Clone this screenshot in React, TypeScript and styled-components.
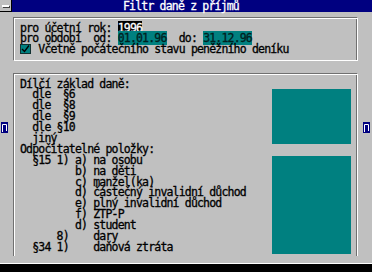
import React from "react";
import styled, { createGlobalStyle } from "styled-components";

const Global = createGlobalStyle`
  html, body { margin: 0; padding: 0; background: #c0c0c0; }
  * { box-sizing: border-box; }
`;

const Window = styled.div`
  position: relative;
  width: 372px;
  height: 272px;
  overflow: hidden;
  background: #c0c0c0;
  display: flex;
  flex-direction: column;
  font-family: "DejaVu Sans Mono", "Liberation Mono", monospace;
  font-size: 11.5px;
  letter-spacing: -0.82px;
  color: #000;
  -webkit-text-stroke: 0.3px currentColor;
`;

const TitleBar = styled.div`
  height: 12px;
  flex: none;
  display: flex;
`;

const SysMenu = styled.div`
  width: 12px;
  height: 12px;
  background: #c0c0c0;
  border-right: 1px solid #000;
  border-bottom: 1px solid #000;
  display: flex;
  align-items: center;
  justify-content: center;
`;

const SysDash = styled.div`
  width: 7px;
  height: 2px;
  background: #fff;
  box-shadow: 1px 1px 0 #404040;
`;

const Caption = styled.div`
  flex: 1;
  background: #000080;
  color: #fff;
  line-height: 12px;
  padding-left: 111px;
  white-space: pre;
`;

const Main = styled.div`
  flex: 1;
  display: flex;
  flex-direction: column;
  gap: 12px;
  padding: 5px 14px 7px 13px;
`;

const Box = styled.div<{ $closed?: boolean }>`
  border-top: 1px solid #707070;
  border-left: 1px solid #707070;
  border-right: 1px solid #fff;
  border-bottom: ${(p) => (p.$closed ? "1px solid #fff" : "none")};
  box-shadow: inset 1px 1px 0 #fff, inset -1px 0 0 #707070;
`;

const TopBox = styled(Box)`
  height: 44px;
  flex: none;
  padding: 4.5px 0 0 6px;
`;

const ListBox = styled(Box)`
  flex: 1;
  display: flex;
  padding: 4.5px 6px 0 6px;
`;

const TextCol = styled.div`
  flex: 1;
`;

const Row = styled.div`
  height: 10.9px;
  line-height: 10.9px;
  white-space: pre;
`;

const Mark = styled.span<{ $tone: "dark" | "teal" }>`
  background: ${(p) => (p.$tone === "dark" ? "#000" : "#008080")};
  color: ${(p) => (p.$tone === "dark" ? "#fff" : "#002020")};
`;

const Check = styled.span`
  display: inline-block;
  width: 11px;
  height: 10px;
  margin-right: 7.3px;
  vertical-align: top;
  background: #008080;
  border: 1px solid #103030;
  svg {
    display: block;
  }
`;

const SwatchCol = styled.div`
  width: 79px;
  display: flex;
  flex-direction: column;
  gap: 12px;
  padding-top: 10.5px;
`;

const Swatch = styled.div<{ $h: number }>`
  height: ${(p) => p.$h}px;
  background: #008080;
`;

const Bottom = styled.div`
  height: 9px;
  flex: none;
  border-top: 1px solid #fff;
  background: #000;
`;

const SideMark = styled.div<{ $side: "left" | "right" }>`
  position: absolute;
  top: 122px;
  ${(p) => (p.$side === "left" ? "left: 1px;" : "left: 363px;")}
  width: 7px;
  height: 11px;
  background: #000080;
  svg {
    display: block;
  }
`;

const Marker = () => (
  <svg width="7" height="11" viewBox="0 0 7 11">
    <path d="M1.5 9V2.5H5.5V9" fill="none" stroke="#fff" strokeWidth="1" />
    <path d="M1 9.5H2" stroke="#fff" strokeWidth="1" />
  </svg>
);

const rows = [
  "Dílčí základ daně:",
  "  dle  §6",
  "  dle  §8",
  "  dle  §9",
  "  dle §10",
  "  jiný",
  "Odpočitatelné položky:",
  "  §15 1) a) na osobu",
  "         b) na děti",
  "         c) manžel(ka)",
  "         d) částečný invalidní důchod",
  "         e) plný invalidní důchod",
  "         f) ZTP-P",
  "         d) student",
  "      8)    dary",
  "  §34 1)    daňová ztráta",
];

export default function App() {
  return (
    <>
      <Global />
      <Window>
        <TitleBar>
          <SysMenu>
            <SysDash />
          </SysMenu>
          <Caption>Filtr daně z příjmů</Caption>
        </TitleBar>
        <Main>
          <TopBox $closed>
            <Row>
              {"pro účetní rok: "}
              <Mark $tone="dark">1996</Mark>
            </Row>
            <Row>
              {"pro období  od: "}
              <Mark $tone="teal">01.01.96</Mark>
              {"  do: "}
              <Mark $tone="teal">31.12.96</Mark>
            </Row>
            <Row>
              <Check>
                <svg width="9" height="8" viewBox="0 0 9 8">
                  <path d="M1 4L3.5 6.5L8 0.5" fill="none" stroke="#000" strokeWidth="1.3" />
                </svg>
              </Check>
              Včetně počátečního stavu peněžního deníku
            </Row>
          </TopBox>
          <ListBox>
            <TextCol>
              {rows.map((r, i) => (
                <Row key={i}>{r}</Row>
              ))}
            </TextCol>
            <SwatchCol>
              <Swatch $h={55} />
              <Swatch $h={98} />
            </SwatchCol>
          </ListBox>
        </Main>
        <Bottom />
        <SideMark $side="left">
          <Marker />
        </SideMark>
        <SideMark $side="right">
          <Marker />
        </SideMark>
      </Window>
    </>
  );
}
